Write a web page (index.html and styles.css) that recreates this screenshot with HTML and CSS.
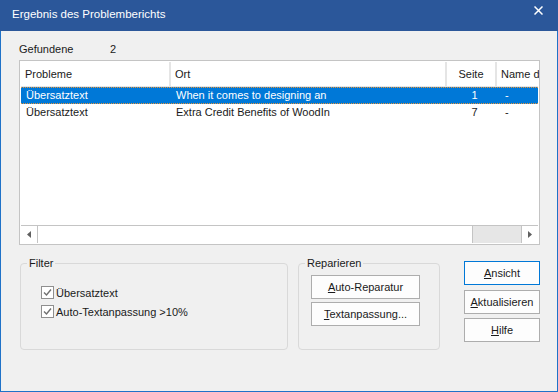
FILE: index.html
```html
<!DOCTYPE html>
<html>
  <head>
    <meta charset="UTF-8" />
    <title>Ergebnis des Problemberichts</title>
    <link rel="stylesheet" href="styles.css">
  </head>
  <body>
    <div class="window">
      <div class="titlebar">
        <span class="title">Ergebnis des Problemberichts</span>
        <span class="close">
          <svg width="9" height="9" viewBox="0 0 9 9"><path d="M0.5 0.5L8.5 8.5M8.5 0.5L0.5 8.5" stroke="#fff" stroke-width="1.5" /></svg>
        </span>
      </div>
      <div class="content">
        <div class="found">
          <span class="found-label">Gefundene</span>
          <span>2</span>
        </div>
        <div class="list">
          <div class="list-head">
            <div class="col">Probleme</div>
            <div class="col">Ort</div>
            <div class="col center">Seite</div>
            <div class="col last">Name d</div>
          </div>
          <div class="row selected">
            <div class="cell">Übersatztext</div>
            <div class="cell">When it comes to designing an</div>
            <div class="cell center">1</div>
            <div class="cell dash">-</div>
          </div>
          <div class="row">
            <div class="cell">Übersatztext</div>
            <div class="cell">Extra Credit Benefits of WoodIn</div>
            <div class="cell center">7</div>
            <div class="cell dash">-</div>
          </div>
          <div class="list-space"></div>
          <div class="hscroll">
            <div class="arrow">
              <svg width="4" height="7" viewBox="0 0 4 7"><path d="M4 0L0 3.5L4 7Z" fill="#606060" /></svg>
            </div>
            <div class="thumb"></div>
            <div class="track"></div>
            <div class="arrow right">
              <svg width="4" height="7" viewBox="0 0 4 7"><path d="M0 0L4 3.5L0 7Z" fill="#606060" /></svg>
            </div>
          </div>
        </div>
        <div class="bottom">
          <fieldset class="group filter">
            <legend>Filter</legend>
            <label class="check">
              <span class="box"><svg width="9" height="9" viewBox="0 0 9 9"><path d="M1 4.5L3.5 7L8 1.5" fill="none" stroke="#707070" stroke-width="1.4" /></svg></span>
              Übersatztext
            </label>
            <label class="check">
              <span class="box"><svg width="9" height="9" viewBox="0 0 9 9"><path d="M1 4.5L3.5 7L8 1.5" fill="none" stroke="#707070" stroke-width="1.4" /></svg></span>
              Auto-Textanpassung &gt;10%
            </label>
          </fieldset>
          <fieldset class="group repair">
            <legend>Reparieren</legend>
            <button class="btn"><u>A</u>uto-Reparatur</button>
            <button class="btn"><u>T</u>extanpassung...</button>
          </fieldset>
          <div class="actions">
            <button class="btn default"><u>A</u>nsicht</button>
            <button class="btn"><u>A</u>ktualisieren</button>
            <button class="btn"><u>H</u>ilfe</button>
          </div>
        </div>
      </div>
    </div>
  </body>
</html>
```

FILE: styles.css
```css
* {
  margin: 0;
  padding: 0;
  box-sizing: border-box;
}
body {
  font-family: "Liberation Sans", Arial, sans-serif;
  font-size: 11px;
  color: #1a1a1a;
  background: #f0f0f0;
}
.window {
  width: 558px;
  height: 392px;
  border: 1px solid #1f72c8;
  border-top: none;
  background: #f0f0f0;
  display: flex;
  flex-direction: column;
}
.titlebar {
  height: 31px;
  background: #2b579a;
  color: #fff;
  display: flex;
  align-items: center;
  justify-content: space-between;
  padding: 0 15px 4px 12px;
  margin: 0 -1px;
}
.title {
  font-size: 11.5px;
}
.close {
  display: flex;
  margin-top: -6px;
}
.content {
  padding: 0 0 0 18px;
}
.found {
  display: flex;
  height: 14px;
  line-height: 14px;
  margin-top: 11px;
}
.found-label {
  width: 91px;
}
.list {
  margin-top: 4px;
  width: 521px;
  height: 185px;
  border: 1px solid #c4c4c4;
  background: #fff;
  padding: 1px;
  display: flex;
  flex-direction: column;
  overflow: hidden;
}
.list-head,
.row {
  display: grid;
  grid-template-columns: 150px 276px 50px 60px;
}
.list-head {
  height: 25px;
  border-bottom: 1px solid #e5e5e5;
}
.col {
  line-height: 24px;
  padding-left: 4px;
  border-right: 2px solid #e5e5e5;
  white-space: nowrap;
  overflow: hidden;
}
.col.last {
  border-right: none;
}
.center {
  text-align: center;
  padding-left: 0;
}
.row {
  height: 17px;
  line-height: 15px;
  border-top: 1px solid transparent;
  border-bottom: 1px solid transparent;
}
.row.selected {
  background: #0078d7;
  color: #fff;
  border-top: 1px dotted #e8953a;
  border-bottom: 1px dotted #e8953a;
}
.cell {
  padding-left: 5px;
  white-space: nowrap;
  overflow: hidden;
}
.cell.dash {
  padding-left: 8px;
}
.list-space {
  flex: 1;
}
.hscroll {
  height: 18px;
  display: flex;
  border-top: 1px solid #c4c4c4;
}
.arrow {
  width: 17px;
  display: flex;
  align-items: center;
  justify-content: center;
  border-right: 1px solid #c4c4c4;
  background: #fff;
}
.arrow.right {
  border-right: none;
  border-left: 1px solid #c4c4c4;
}
.thumb {
  width: 435px;
  background: #fff;
  border-right: 1px solid #c4c4c4;
}
.track {
  flex: 1;
  background: #e6e6e6;
}
.bottom {
  display: flex;
  align-items: flex-start;
  margin-top: 11px;
}
.group {
  border: 1px solid #d9d9d9;
  border-radius: 4px;
  padding: 0 0 0 6px;
  height: 94px;
}
.group legend {
  padding: 0 2px;
  line-height: 14px;
}
.filter {
  width: 268px;
  margin-left: 1px;
}
.repair {
  width: 142px;
  margin-left: 10px;
  padding-left: 6px;
}
.check {
  display: flex;
  align-items: center;
  height: 19px;
  margin-left: 14px;
}
.check:first-of-type {
  margin-top: 13px;
}
.box {
  width: 13px;
  height: 13px;
  border: 1px solid #8f8f8f;
  background: #fff;
  display: flex;
  align-items: center;
  justify-content: center;
  margin-right: 2px;
}
.btn {
  display: block;
  font-family: inherit;
  font-size: 11px;
  color: #1a1a1a;
  background: #fdfdfd;
  border: 1px solid #adadad;
  height: 24px;
  line-height: 20px;
}
.repair .btn {
  width: 109px;
  margin-left: 6px;
}
.repair .btn:first-of-type {
  margin-top: 5px;
}
.repair .btn + .btn {
  margin-top: 3px;
}
.actions {
  margin-left: 24px;
  margin-top: 5px;
}
.actions .btn {
  width: 76px;
  margin-bottom: 4px;
}
.btn.default {
  border-color: #0078d7;
  margin-bottom: 5px;
}
```
